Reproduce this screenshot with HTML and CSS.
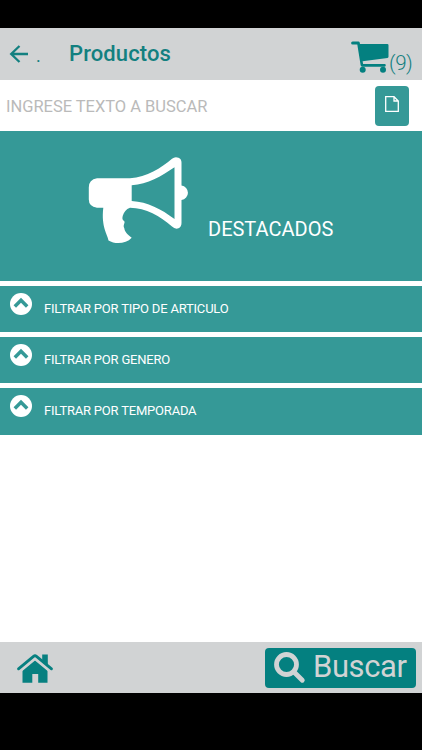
FILE: index.html
```html
<!DOCTYPE html>
<html lang="es">
<head>
<meta charset="utf-8">
<title>Productos</title>
<link rel="stylesheet" href="styles.css">
</head>
<body>
<header class="header">
  <svg class="back" viewBox="0 0 20 20"><path d="M10.500 2 2.200 10l8.300 8M2.200 10H19"/></svg>
  <span class="dot">.</span>
  <h1 class="title">Productos</h1>
  <svg class="cart" viewBox="0 0 38 33"><path d="M1.600.4H7.400Q8.500.4 8.700 1.500L9 3H36.300Q37.500 3 37.500 4.200V15.800Q37.500 16.700 36.500 16.900L11.600 20.300 12.100 22.900H33.600Q34.800 22.900 34.800 24.300T33.600 25.700H11.200Q9.700 25.700 9.600 24L6.300 3.400H1.600A1.500 1.500 0 0 1 1.600.4Z"/><circle cx="11.700" cy="28.700" r="3"/><circle cx="32" cy="28.700" r="3"/></svg>
  <span class="count">(9)</span>
</header>
<main class="content">
  <div class="search">
    <span class="placeholder">INGRESE TEXTO A BUSCAR</span>
    <div class="clear"><svg class="file" viewBox="0 0 14 16"><path d="M.7.700H9L13.300 5V15.300H.7ZM9 .7V5h4.300"/></svg></div>
  </div>
  <section class="banner">
    <svg class="horn" viewBox="0 0 102 88"><path fill-rule="evenodd" d="M9 21.300H42C59 20 73 11 84 1.700Q87-.8 90.500.700 93.500 2 93.500 5.500V28.500A7.300 7.300 0 0 1 93.500 43V66Q93.500 70 90.500 71.300 87 72.500 84 69.500C72 59 58 51 42 50.700 38 52 36 55 34.700 59 34 62 34.500 63 36.300 64.300 37.500 66 34.500 68 36.300 71.300 37 76 40.500 78 43.700 80.700 38 87 27 87.500 20.500 83.500 19.500 77 13 70 15.300 50.700H9Q.8 49.500.8 42.500V30.500Q.8 22.500 9 21.300ZM43.700 28.300V44C60 45 73 52 86.500 62V10.300C73 19.500 60 27 43.700 28.300Z"/></svg>
    <span class="banner-label">DESTACADOS</span>
  </section>
  <div class="filter"><svg class="chevron" viewBox="0 0 22 22"><circle cx="11" cy="11" r="11"/><path d="M4.800 13.500 11 7.300l6.200 6.200"/></svg><span class="label">FILTRAR POR TIPO DE ARTICULO</span></div>
  <div class="filter"><svg class="chevron" viewBox="0 0 22 22"><circle cx="11" cy="11" r="11"/><path d="M4.800 13.500 11 7.300l6.200 6.200"/></svg><span class="label">FILTRAR POR GENERO</span></div>
  <div class="filter"><svg class="chevron" viewBox="0 0 22 22"><circle cx="11" cy="11" r="11"/><path d="M4.800 13.500 11 7.300l6.200 6.200"/></svg><span class="label">FILTRAR POR TEMPORADA</span></div>
</main>
<footer class="footer">
  <svg class="home" viewBox="0 0 36 29"><path d="M5.500 16 18 5.800 30.500 16V28.700H21.200V20H15.300V28.700H5.500Z"/><path d="M25.200.500h5.600v11l-5.600-5Z"/><path class="roof-gap" d="M3.500 16.500 18 4.700 32.500 16.500"/><path class="roof" d="M1.500 14.800 16.500 2.300Q18 1.200 19.500 2.300L34.500 14.800"/></svg>
  <div class="submit">
    <svg class="lens" viewBox="0 0 31 31"><circle cx="12.500" cy="12.500" r="10"/><path d="m20 20 8.300 8.300"/></svg>
    <span class="submit-label">Buscar</span>
  </div>
</footer>
</body>
</html>
```
FILE: styles.css
```css
* { box-sizing: border-box; }
body {
  margin: 0;
  height: 750px;
  padding: 28px 0 57px;
  background: #000;
  display: flex;
  flex-direction: column;
  font-family: Roboto, sans-serif;
  overflow: hidden;
}
svg { display: block; flex: none; overflow: visible; }
span, h1 { white-space: nowrap; }
.header {
  height: 52px;
  flex: none;
  display: flex;
  align-items: flex-start;
  background: #d1d3d4;
  color: #138080;
}
.back { width: 20px; height: 20px; margin: 16px 0 0 9px; fill: none; stroke: #138080; stroke-width: 2.3; }
.dot { width: 33px; margin: 18px 0 0 7px; font-size: 18px; line-height: 20px; }
.title { margin: 12px 0 0; font-size: 22px; line-height: 28px; font-weight: 500; letter-spacing: .1px; }
.cart { width: 38px; height: 33px; margin: 12.500px 0 0 auto; fill: #048080; }
.count { width: 33px; margin-top: 22px; font-size: 20.500px; line-height: 26px; font-weight: 300; letter-spacing: -.4px; }
.content { flex: 1; background: #fff; }
.search { height: 51px; display: flex; align-items: center; justify-content: space-between; padding: 0 13px 0 6px; }
.placeholder { color: #bababa; font-size: 16.500px; letter-spacing: -.03px; padding-top: 1px; }
.clear { width: 34px; height: 40px; border-radius: 4px; background: #359997; display: flex; justify-content: center; padding-top: 10px; }
.file { width: 14px; height: 16px; fill: none; stroke: #fff; stroke-width: 1.3; }
.banner { height: 150px; display: flex; align-items: flex-start; background: #359997; color: #fff; }
.horn { width: 102px; height: 88px; margin: 26px 0 0 88px; fill: #fff; }
.banner-label { margin: 84px 0 0 18px; font-size: 20px; line-height: 28px; }
.filter { height: 46.500px; margin-top: 4.700px; display: flex; align-items: flex-start; background: #359997; color: #fff; }
.chevron { width: 22px; height: 22px; margin: 7px 0 0 9.500px; fill: #fff; }
.chevron path { fill: none; stroke: #359997; stroke-width: 3.5; }
.label { margin: 13px 0 0 12.500px; font-size: 13px; line-height: 20px; letter-spacing: -.2px; }
.footer { height: 51px; flex: none; display: flex; align-items: flex-start; justify-content: space-between; background: #d1d3d4; padding: 6px 6px 0 17px; }
.home { width: 36px; height: 29px; margin-top: 6px; fill: #078080; }
.roof-gap { fill: none; stroke: #d1d3d4; stroke-width: 3; }
.roof { fill: none; stroke: #078080; stroke-width: 2.8; stroke-linecap: round; }
.submit { width: 151px; height: 40px; border-radius: 4px; background: #048080; color: #d1d3d4; display: flex; align-items: flex-start; }
.lens { width: 31px; height: 31px; margin: 4px 0 0 9px; fill: none; stroke: #d1d3d4; stroke-width: 4.8; stroke-linecap: round; }
.submit-label { margin: 1px 0 0 8px; font-size: 31px; line-height: 36px; letter-spacing: -.4px; }
```
